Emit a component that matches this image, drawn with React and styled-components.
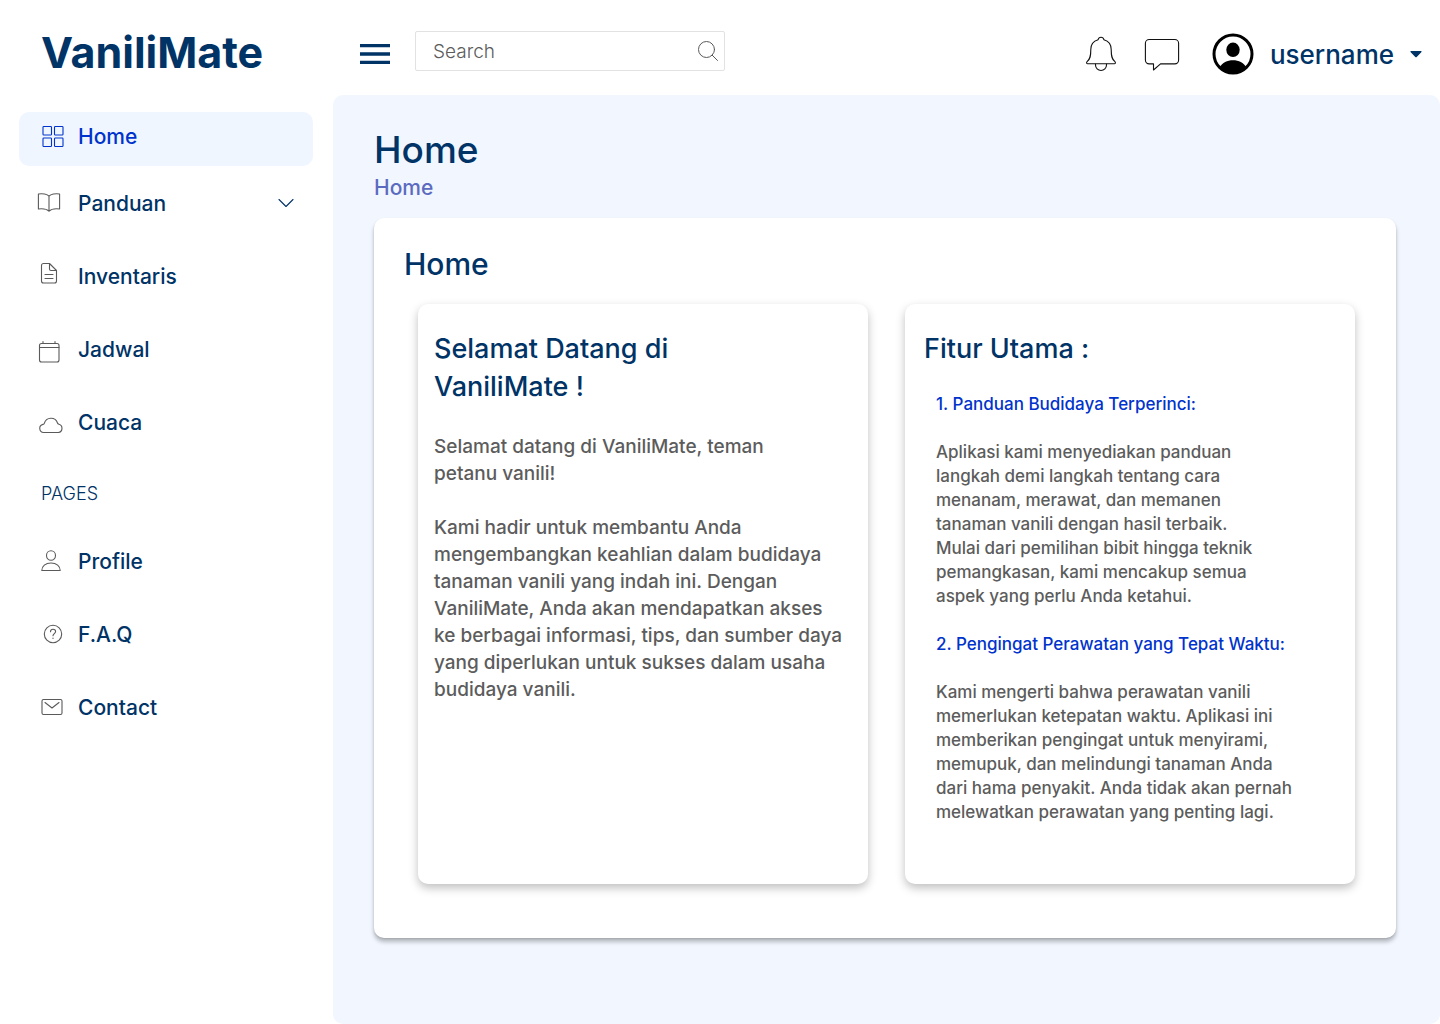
import React from "react";
import styled, { createGlobalStyle, css } from "styled-components";

const navy = "#003366";
const blue = "#0033cc";
const panel = "#f1f6ff";

const GlobalStyle = createGlobalStyle`
  *, *::before, *::after { box-sizing: border-box; }
  body {
    margin: 0;
    background: #ffffff;
    color: ${navy};
    font-family: Inter, "Open Sans", sans-serif;
    font-weight: 500;
  }
  h1, h2, h3, h4, p, ul, ol { margin: 0; padding: 0; font-weight: 500; }
  ul, ol { list-style: none; }
  a { color: inherit; text-decoration: none; }
  button, input { font: inherit; color: inherit; }
`;

const Page = styled.div`
  display: grid;
  grid-template-columns: 333px minmax(0, 1fr);
  min-height: 100vh;
`;

const Sidebar = styled.aside`
  padding: 0 20px 40px 19px;
`;

const Brand = styled.a`
  display: flex;
  align-items: center;
  height: 112px;
  padding: 0 0 8px 22px;
  font-size: 43px;
  font-weight: 700;
`;

const NavList = styled.ul`
  display: flex;
  flex-direction: column;
  gap: 19px;
`;

const rowStyle = css`
  display: flex;
  align-items: center;
  gap: 11px;
  width: 100%;
  height: 54px;
  padding: 0 19px 0 16px;
  border: 0;
  border-radius: 10px;
  background: none;
  font-size: 21px;
  text-align: left;
  cursor: pointer;
`;

const NavLink = styled.a`
  ${rowStyle}
  ${(p) =>
    p.$active &&
    css`
      margin-bottom: -9px;
      padding-bottom: 6px;
      background: #eff6ff;
      color: ${blue};
    `}
`;

const NavToggle = styled.button`
  ${rowStyle}
`;

const NavLabel = styled.span`
  flex: 1;
`;

const SectionTitle = styled.h2`
  margin: 30px 0 25px 22px;
  font-size: 18px;
  font-weight: 300;
  line-height: 30px;
`;

const Content = styled.div`
  display: flex;
  flex-direction: column;
  min-width: 0;
`;

const TopBar = styled.header`
  display: flex;
  align-items: center;
  height: 95px;
  padding: 13px 18px 0 27px;
`;

const IconButton = styled.button`
  display: flex;
  padding: 0;
  border: 0;
  background: none;
  cursor: pointer;
`;

const SearchBox = styled.form`
  display: flex;
  align-items: center;
  flex: 0 1 310px;
  min-width: 0;
  height: 40px;
  margin: 0 24px 6px 25px;
  padding: 0 6px 0 17px;
  border: 1px solid #e2e2e2;
  border-radius: 2px;
`;

const SearchInput = styled.input`
  flex: 1;
  width: 100%;
  min-width: 0;
  padding: 0;
  border: 0;
  outline: 0;
  background: none;
  color: #5c5c5c;
  font-size: 19px;
  font-weight: 300;
  &::placeholder { color: #5c5c5c; opacity: 1; }
`;

const Actions = styled.div`
  display: flex;
  align-items: center;
  gap: 28px;
  margin-left: auto;
`;

const UserButton = styled.button`
  display: flex;
  align-items: center;
  gap: 16px;
  margin-left: 4px;
  padding: 0;
  border: 0;
  background: none;
  font-size: 26px;
  cursor: pointer;
`;

const Main = styled.main`
  flex: 1;
  padding: 28px 44px 86px 41px;
  border-radius: 10px;
  background: ${panel};
`;

const PageTitle = styled.h1`
  font-size: 37px;
  line-height: 54px;
`;

const Breadcrumb = styled.nav`
  margin-bottom: 19px;
  color: #5c6bc0;
  font-size: 21px;
  line-height: 22px;
`;

const Card = styled.section`
  padding: 28px 41px 54px 30px;
  border-radius: 10px;
  background: #ffffff;
  box-shadow: 0 4px 4px rgba(0, 0, 0, 0.25), 0 1px 2px rgba(0, 0, 0, 0.1);
`;

const CardTitle = styled.h2`
  font-size: 30px;
  line-height: 36px;
`;

const Columns = styled.div`
  display: grid;
  grid-template-columns: 1fr 1fr;
  gap: 37px;
  margin: 22px 0 0 14px;
`;

const Tile = styled.article`
  min-height: 580px;
  padding: 26px 16px 60px;
  border-radius: 10px;
  background: #ffffff;
  box-shadow: 0 4px 10px rgba(0, 0, 0, 0.25);
`;

const TileTitle = styled.h3`
  padding-left: ${(p) => (p.$indent ? "3px" : "0")};
  font-size: 27px;
  line-height: 38px;
  white-space: pre-line;
`;

const Intro = styled.p`
  margin-top: 27px;
  color: #5c5c5c;
  font-size: 19px;
  line-height: 27px;
  white-space: pre-line;
`;

const Features = styled.ol`
  display: grid;
  gap: 24px;
  margin-top: 24px;
  padding-left: 15px;
  font-size: 17px;
  line-height: 24px;
`;

const FeatureTitle = styled.h4`
  margin-bottom: 24px;
  color: ${blue};
`;

const FeatureText = styled.p`
  color: #5c5c5c;
  white-space: pre-line;
`;

function Glyph({ color = "#5a5a5a", children }) {
  return (
    <svg width="32" height="32" viewBox="0 0 32 32" fill="none" stroke={color} strokeWidth="1.1" strokeLinecap="round" strokeLinejoin="round" aria-hidden="true">
      {children}
    </svg>
  );
}

const GridIcon = () => (
  <Glyph color={blue}>
    <rect x="8" y="6.5" width="8.5" height="8.5" rx="0.8" />
    <rect x="19.5" y="6.5" width="8.5" height="8.5" rx="0.8" />
    <rect x="8" y="18" width="8.5" height="8.5" rx="0.8" />
    <rect x="19.5" y="18" width="8.5" height="8.5" rx="0.8" />
  </Glyph>
);

const BookIcon = () => (
  <Glyph>
    <path d="M14 9.2C12.3 7.2 7.5 6.2 3.4 7v15c4.2-.5 8.6.2 10.6 2.2 2-2 6.400-2.700 10.600-2.200V7C20.500 6.200 15.700 7.200 14 9.200v15" />
  </Glyph>
);

const FileIcon = () => (
  <Glyph>
    <path d="M14.500 3.500H8.500a2 2 0 0 0-2 2v15.500a2 2 0 0 0 2 2h11a2 2 0 0 0 2-2V10.500zM14.500 3.500v5.500a1.500 1.500 0 0 0 1.500 1.500h5.500M10 14.500h8M10 18.500h8" />
  </Glyph>
);

const CalendarIcon = () => (
  <Glyph>
    <rect x="4.500" y="10.500" width="19.500" height="18.500" rx="2" />
    <path d="M4.500 14.500H24M8 8.500v2M20 8.500v2" />
  </Glyph>
);

const CloudIcon = () => (
  <Glyph>
    <path d="M8.600 26.500a4.100 4.100 0 0 1-.6-8.100c.6-.1 1.100-.3 1.300-1a6.900 6.900 0 0 1 13.200-.4c.2.800.6 1.100 1.400 1.300a4.200 4.200 0 0 1-.500 8.200z" />
  </Glyph>
);

const PersonIcon = () => (
  <Glyph>
    <ellipse cx="16" cy="10.500" rx="4.500" ry="4.700" />
    <path d="M6.800 25.500c0-4.300 3.700-7.500 9.200-7.500s9.200 3.200 9.200 7.500z" />
  </Glyph>
);

const HelpIcon = () => (
  <Glyph>
    <circle cx="18" cy="16" r="8.700" />
    <path d="M15.500 13.800c0-1.500 1-2.500 2.500-2.500s2.600.900 2.600 2.300c0 2-2.600 2-2.600 4.200M18 20v.5" />
  </Glyph>
);

const MailIcon = () => (
  <Glyph>
    <rect x="7" y="8.500" width="20" height="15" rx="1.500" />
    <path d="M10 11.500l7 5.500 7-5.500" />
  </Glyph>
);

const ChevronIcon = () => (
  <svg width="16" height="10" viewBox="0 0 16 10" fill="none" stroke={navy} strokeWidth="1.100" strokeLinecap="round" strokeLinejoin="round" aria-hidden="true">
    <path d="M1 1.500l7 7 7-7" />
  </svg>
);

const MenuIcon = () => (
  <svg width="30" height="20" viewBox="0 0 30 20" fill={navy} aria-hidden="true">
    <path d="M0 0h30v3.300H0zM0 8.300h30v3.400H0zM0 16.700h30V20H0z" />
  </svg>
);

const SearchIcon = () => (
  <svg width="20" height="20" viewBox="0 0 20 20" fill="none" stroke="#5a5a5a" strokeWidth="1" strokeLinecap="round" aria-hidden="true">
    <circle cx="8.500" cy="8.500" r="8" />
    <path d="M14.200 14.200l5.300 5.300" />
  </svg>
);

const BellIcon = () => (
  <svg width="30" height="36" viewBox="0 0 30 36" fill="none" stroke="#111111" strokeWidth="1.100" strokeLinejoin="round" aria-hidden="true">
    <path d="M15 1.200c-1.500 0-2.600 1-2.900 2.500C7.500 5 4.800 8.800 4.800 13.500c0 6.500-.5 9.500-3.700 12.200-.9.800-.500 2.100.600 2.100h26.600c1.100 0 1.500-1.300.600-2.100-3.200-2.700-3.700-5.700-3.700-12.200 0-4.700-2.700-8.500-7.300-9.800C17.600 2.200 16.500 1.200 15 1.200z" />
    <path d="M9.500 27.800v1.200a5.500 5.500 0 0 0 11 0v-1.200" />
  </svg>
);

const ChatIcon = () => (
  <svg width="36" height="34" viewBox="0 0 36 34" fill="none" stroke="#111111" strokeWidth="1.100" strokeLinejoin="round" aria-hidden="true">
    <path d="M5.200 2.500h25.600a3.800 3.800 0 0 1 3.800 3.800v16.800a3.800 3.800 0 0 1-3.800 3.800H16.500L9.500 33v-6.100H5.200a3.800 3.800 0 0 1-3.800-3.800V6.300a3.800 3.800 0 0 1 3.800-3.800z" />
  </svg>
);

const AvatarIcon = () => (
  <svg width="42" height="42" viewBox="0 0 42 42" aria-hidden="true">
    <circle cx="21" cy="21" r="19" fill="#ffffff" stroke="#000000" strokeWidth="3" />
    <ellipse cx="21" cy="16.800" rx="6.700" ry="7.200" fill="#000000" />
    <path d="M7.600 34.200c2.800-4.500 7.600-7 13.400-7s10.600 2.500 13.400 7c-3.500 3.900-8.200 6-13.400 6s-9.900-2.100-13.400-6z" fill="#000000" />
  </svg>
);

const CaretIcon = () => (
  <svg width="12" height="8" viewBox="0 0 12 8" fill={navy} aria-hidden="true">
    <path d="M1.200 1h9.600c.8 0 1 .7.5 1.200L6.700 7c-.4.4-1 .4-1.400 0L.7 2.200C.2 1.700.4 1 1.200 1z" />
  </svg>
);

const mainLinks = [
  { label: "Home", icon: GridIcon, active: true },
  { label: "Panduan", icon: BookIcon, expandable: true },
  { label: "Inventaris", icon: FileIcon },
  { label: "Jadwal", icon: CalendarIcon },
  { label: "Cuaca", icon: CloudIcon },
];

const pageLinks = [
  { label: "Profile", icon: PersonIcon },
  { label: "F.A.Q", icon: HelpIcon },
  { label: "Contact", icon: MailIcon },
];

const intro = `Selamat datang di VaniliMate, teman
petanu vanili!

Kami hadir untuk membantu Anda
mengembangkan keahlian dalam budidaya
tanaman vanili yang indah ini. Dengan
VaniliMate, Anda akan mendapatkan akses
ke berbagai informasi, tips, dan sumber daya
yang diperlukan untuk sukses dalam usaha
budidaya vanili.`;

const features = [
  {
    title: "1. Panduan Budidaya Terperinci:",
    text: `Aplikasi kami menyediakan panduan
langkah demi langkah tentang cara
menanam, merawat, dan memanen
tanaman vanili dengan hasil terbaik.
Mulai dari pemilihan bibit hingga teknik
pemangkasan, kami mencakup semua
aspek yang perlu Anda ketahui.`,
  },
  {
    title: "2. Pengingat Perawatan yang Tepat Waktu:",
    text: `Kami mengerti bahwa perawatan vanili
memerlukan ketepatan waktu. Aplikasi ini
memberikan pengingat untuk menyirami,
memupuk, dan melindungi tanaman Anda
dari hama penyakit. Anda tidak akan pernah
melewatkan perawatan yang penting lagi.`,
  },
];

function NavItems({ items }) {
  return (
    <NavList>
      {items.map(({ label, icon: Icon, active, expandable }) => (
        <li key={label}>
          {expandable ? (
            <NavToggle type="button" aria-expanded="false">
              <Icon />
              <NavLabel>{label}</NavLabel>
              <ChevronIcon />
            </NavToggle>
          ) : (
            <NavLink href="#" $active={active} aria-current={active ? "page" : undefined}>
              <Icon />
              <NavLabel>{label}</NavLabel>
            </NavLink>
          )}
        </li>
      ))}
    </NavList>
  );
}

export default function App() {
  return (
    <>
      <GlobalStyle />
      <Page>
        <Sidebar>
          <Brand href="#">VaniliMate</Brand>
          <nav>
            <NavItems items={mainLinks} />
            <SectionTitle>PAGES</SectionTitle>
            <NavItems items={pageLinks} />
          </nav>
        </Sidebar>
        <Content>
          <TopBar>
            <IconButton type="button" aria-label="Menu">
              <MenuIcon />
            </IconButton>
            <SearchBox role="search">
              <SearchInput type="text" placeholder="Search" aria-label="Search" />
              <IconButton type="submit" aria-label="Search">
                <SearchIcon />
              </IconButton>
            </SearchBox>
            <Actions>
              <IconButton type="button" aria-label="Notifications">
                <BellIcon />
              </IconButton>
              <IconButton type="button" aria-label="Messages">
                <ChatIcon />
              </IconButton>
              <UserButton type="button">
                <AvatarIcon />
                username
                <CaretIcon />
              </UserButton>
            </Actions>
          </TopBar>
          <Main>
            <PageTitle>Home</PageTitle>
            <Breadcrumb aria-label="Breadcrumb">
              <a href="#">Home</a>
            </Breadcrumb>
            <Card>
              <CardTitle>Home</CardTitle>
              <Columns>
                <Tile>
                  <TileTitle>{"Selamat Datang di\nVaniliMate !"}</TileTitle>
                  <Intro>{intro}</Intro>
                </Tile>
                <Tile>
                  <TileTitle $indent>Fitur Utama :</TileTitle>
                  <Features>
                    {features.map(({ title, text }) => (
                      <li key={title}>
                        <FeatureTitle>{title}</FeatureTitle>
                        <FeatureText>{text}</FeatureText>
                      </li>
                    ))}
                  </Features>
                </Tile>
              </Columns>
            </Card>
          </Main>
        </Content>
      </Page>
    </>
  );
}
